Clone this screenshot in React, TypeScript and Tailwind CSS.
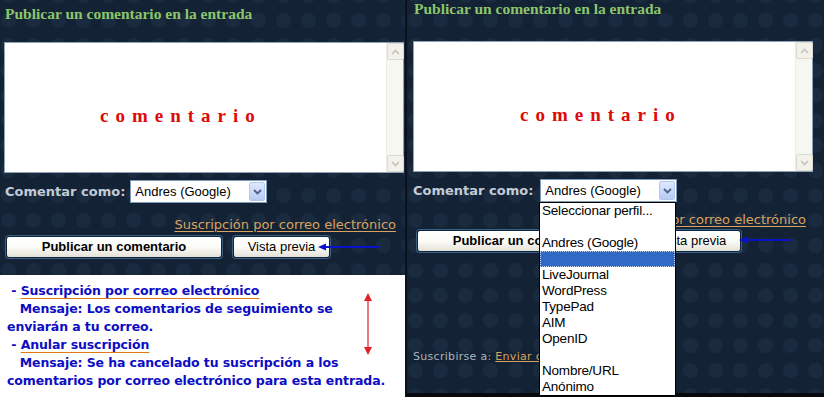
import React from 'react';

const dots =
  'bg-[#132234] bg-[radial-gradient(circle,#1a2b3f_7px,transparent_8px)] bg-[length:25px_25px] bg-[position:-4px_8px]';

const ScrollBar: React.FC = () => (
  <div className="absolute right-0 top-0 bottom-0 w-[17px] bg-[#f7f7f2] border-l border-[#eeede5] flex flex-col justify-between">
    <div className="h-[17px] w-[17px] bg-[#f2f1ea] border border-[#dcdbd2] rounded-[2px] flex items-center justify-center">
      <svg width="9" height="6" viewBox="0 0 9 6">
        <path d="M1 5 L4.5 1.5 L8 5" stroke="#c4c3ba" strokeWidth="1.6" fill="none" />
      </svg>
    </div>
    <div className="h-[17px] w-[17px] bg-[#f2f1ea] border border-[#dcdbd2] rounded-[2px] flex items-center justify-center">
      <svg width="9" height="6" viewBox="0 0 9 6">
        <path d="M1 1 L4.5 4.5 L8 1" stroke="#c4c3ba" strokeWidth="1.6" fill="none" />
      </svg>
    </div>
  </div>
);

const CommentBox: React.FC<{ textLeft: string }> = ({ textLeft }) => (
  <div className="relative h-[131px] border border-[#8da2b6] bg-white">
    <div className={`absolute top-[63px] ${textLeft} font-['Liberation_Serif',serif] font-bold text-[19px] leading-[20px] tracking-[7px] text-[#dd0a0a]`}>
      comentario
    </div>
    <ScrollBar />
  </div>
);

const Select: React.FC = () => (
  <div className="relative w-[137px] h-[23px] bg-white border border-[#7f9db9] flex items-center">
    <span className="pl-[4px] font-['Liberation_Sans',sans-serif] text-[13px] text-black">Andres (Google)</span>
    <div className="absolute right-[1px] top-[1px] bottom-[1px] w-[16px] rounded-[2px] border border-[#b3c7ee] bg-gradient-to-b from-[#dfe9fd] to-[#b6cbf5] flex items-center justify-center">
      <svg width="9" height="6" viewBox="0 0 9 6">
        <path d="M1 1 L4.5 4.5 L8 1" stroke="#4d6185" strokeWidth="1.8" fill="none" />
      </svg>
    </div>
  </div>
);

const XpButton: React.FC<{ w: string; bold?: boolean; children: React.ReactNode }> = ({ w, bold, children }) => (
  <div className={`${w} h-[22px] rounded-[3px] border border-[#0d2540] shadow-[0_0_0_1px_#3d5f80] bg-gradient-to-b from-white via-[#fbfbf8] to-[#e4e1d6] flex items-center justify-center font-['Liberation_Sans',sans-serif] text-[13px] text-black ${bold ? 'font-bold' : ''}`}>
    {children}
  </div>
);

const LeftArrow: React.FC<{ width: number; className: string }> = ({ width, className }) => (
  <svg className={`absolute ${className}`} width={width} height="8" viewBox={`0 0 ${width} 8`}>
    <line x1="6" y1="4" x2={width} y2="4" stroke="#0a12c8" strokeWidth="2" />
    <path d="M0 4 L8 0.5 L8 7.5 Z" fill="#0a12c8" />
  </svg>
);

const LeftPanel: React.FC = () => (
  <div className={`relative w-[405px] h-full flex flex-col ${dots}`}>
    <div className="pl-[5px] pt-[4px] h-[20px] font-['Liberation_Serif',serif] font-bold text-[15.5px] leading-[20px] text-[#8cc56b]">
      Publicar un comentario en la entrada
    </div>
    <div className="mt-[22px] ml-[4px] w-[400px]">
      <CommentBox textLeft="left-[95px]" />
    </div>
    <div className="mt-[7px] flex items-center gap-[5px] pl-[5px]">
      <span className="font-['DejaVu_Sans',sans-serif] font-bold text-[13px] text-[#c3ccd6]">Comentar como:</span>
      <Select />
    </div>
    <div className="mt-[14px] pr-[9px] text-right font-['DejaVu_Sans',sans-serif] text-[13px] leading-[15px] text-[#d9a35e] underline underline-offset-2">
      Suscripción por correo electrónico
    </div>
    <div className="relative mt-[4px] flex items-center gap-[11px] pl-[6px]">
      <XpButton w="w-[216px]" bold>Publicar un comentario</XpButton>
      <XpButton w="w-[97px]">Vista previa</XpButton>
      <LeftArrow width={62} className="left-[318px] top-[7px]" />
    </div>
    <div className="relative mt-[17px] flex-1 bg-white pl-[7px] pt-[7px] font-['DejaVu_Sans',sans-serif] font-bold text-[12.5px] leading-[18px] text-[#0d0dc3] tracking-[-0.1px]">
      <div>
        {'\u00a0'}-{'\u00a0'}<span className="underline decoration-[#e07a18] underline-offset-[3px]">Suscripción por correo electrónico</span>
      </div>
      <div>{'\u00a0\u00a0\u00a0'}Mensaje: Los comentarios de seguimiento se</div>
      <div>enviarán a tu correo.</div>
      <div>
        {'\u00a0'}-{'\u00a0'}<span className="underline decoration-[#e07a18] underline-offset-[3px]">Anular suscripción</span>
      </div>
      <div>{'\u00a0\u00a0\u00a0'}Mensaje: Se ha cancelado tu suscripción a los</div>
      <div>comentarios por correo electrónico para esta entrada.</div>
      <svg className="absolute left-[363px] top-[18px]" width="10" height="62" viewBox="0 0 10 62">
        <line x1="5" y1="6" x2="5" y2="56" stroke="#e0202a" strokeWidth="1.2" />
        <path d="M5 0 L9 8 L1 8 Z" fill="#e0202a" />
        <path d="M5 62 L9 54 L1 54 Z" fill="#e0202a" />
      </svg>
    </div>
  </div>
);

const options = [
  'Seleccionar perfil...',
  '',
  'Andres (Google)',
  '__selected__',
  'LiveJournal',
  'WordPress',
  'TypePad',
  'AIM',
  'OpenID',
  '',
  'Nombre/URL',
  'Anónimo',
];

const RightPanel: React.FC = () => (
  <div className={`relative flex-1 h-full flex flex-col ${dots}`}>
    <div className="pl-[7px] pt-0 h-[17px] font-['Liberation_Serif',serif] font-bold text-[15.5px] leading-[17px] text-[#8cc56b]">
      Publicar un comentario en la entrada
    </div>
    <div className="mt-[24px] ml-[6px] w-[400px]">
      <CommentBox textLeft="left-[106px]" />
    </div>
    <div className="relative mt-[7px] flex items-center gap-[7px] pl-[6px]">
      <span className="font-['DejaVu_Sans',sans-serif] font-bold text-[13px] text-[#c3ccd6]">Comentar como:</span>
      <Select />
      <div className="absolute left-[132px] top-[23px] w-[137px] bg-white border border-black z-10 font-['Liberation_Sans',sans-serif] text-[13.5px] leading-[16px] text-black">
        {options.map((o, i) =>
          o === '__selected__' ? (
            <div key={i} className="h-[16px] bg-[#316ac5] outline-1 outline-dotted outline-[#c8d4ea] -outline-offset-1" />
          ) : (
            <div key={i} className="h-[16px] pl-[2px] whitespace-nowrap tracking-[-0.2px]">
              {o}
            </div>
          )
        )}
      </div>
    </div>
    <div className="mt-[10px] pr-[18px] text-right font-['DejaVu_Sans',sans-serif] text-[13px] leading-[15px] text-[#d9a35e] underline underline-offset-2">
      Suscripción por correo electrónico
    </div>
    <div className="relative mt-[3px] flex items-center gap-[11px] pl-[10px]">
      <XpButton w="w-[216px]" bold>Publicar un comentario</XpButton>
      <XpButton w="w-[97px]">Vista previa</XpButton>
      <LeftArrow width={52} className="left-[332px] top-[6px]" />
    </div>
    <div className="mt-[98px] pl-[6px] font-['DejaVu_Sans',sans-serif] text-[11px] leading-[14px] tracking-[0.3px] text-[#aab4bf]">
      Suscribirse a: <span className="underline text-[#d9a35e]">Enviar comentarios (Atom)</span>
    </div>
    <div className="mt-auto h-[4px] bg-[#07090c]" />
  </div>
);

export default function App() {
  return (
    <div className="flex w-[824px] h-[397px] overflow-hidden bg-[#0a121c]">
      <LeftPanel />
      <div className="w-[2px] h-full bg-[#0a121c]" />
      <RightPanel />
    </div>
  );
}
